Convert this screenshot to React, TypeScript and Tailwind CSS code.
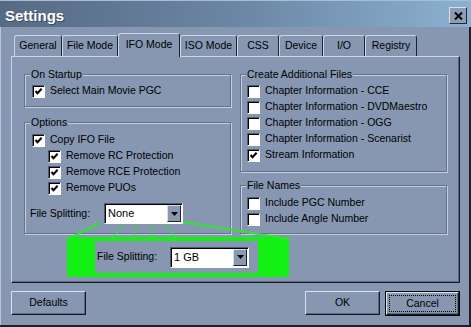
import React from "react";

const tabs = [
  { label: "General", w: "w-[48px]" },
  { label: "File Mode", w: "w-[56px]" },
  { label: "IFO Mode", w: "w-[62px]", active: true },
  { label: "ISO Mode", w: "w-[57px]" },
  { label: "CSS", w: "w-[42px]" },
  { label: "Device", w: "w-[44px]" },
  { label: "I/O", w: "w-[42px]" },
  { label: "Registry", w: "w-[52px]" },
];

function Check({ label, checked }: { label: string; checked?: boolean }) {
  return (
    <div className="flex h-[16px] items-center gap-[5px]">
      <span className="relative h-[13px] w-[13px] shrink-0 border border-t-[#4f5b70] border-l-[#4f5b70] border-b-white border-r-white bg-white shadow-[inset_1px_1px_0_#000]">
        {checked && (
          <svg width="11" height="11" viewBox="0 0 11 11" className="absolute left-0 top-0">
            <path d="M2.5 5 L4.5 7.2 L8.6 2.8" fill="none" stroke="#000" strokeWidth="2" />
          </svg>
        )}
      </span>
      <span className="whitespace-nowrap">{label}</span>
    </div>
  );
}

function Combo({ value }: { value: string }) {
  return (
    <div className="flex h-[21px] w-[79px] border border-t-[#4f5b70] border-l-[#4f5b70] border-b-white border-r-white bg-white p-[1px] shadow-[inset_1px_1px_0_#000]">
      <span className="flex-1 pl-[2px] text-[11px] leading-[17px]">{value}</span>
      <span className="flex w-[14px] items-center justify-center border border-t-[#d6deea] border-l-[#d6deea] border-b-[#1b212b] border-r-[#1b212b] bg-[#8a99b1]">
        <svg width="7" height="4" viewBox="0 0 7 4">
          <path d="M0 0 H7 L3.5 4 Z" fill="#000" />
        </svg>
      </span>
    </div>
  );
}

function Group({ title, children }: { title: string; children: React.ReactNode }) {
  return (
    <fieldset className="border border-[#64738b] shadow-[1px_1px_0_#c3cede,inset_1px_1px_0_#c3cede]">
      <legend className="ml-[5px] bg-[#8797b1] px-[1px] leading-[14px]">{title}</legend>
      {children}
    </fieldset>
  );
}

function Button({ label }: { label: string }) {
  return (
    <button className="flex h-[24px] w-[75px] items-center justify-center border border-t-[#d9e1ec] border-l-[#d9e1ec] border-b-[#151a22] border-r-[#151a22] bg-[#8797b1] shadow-[inset_-1px_-1px_0_#5c6a80]">
      {label}
    </button>
  );
}

export default function App() {
  return (
    <div className="relative h-[327px] w-[471px] overflow-hidden bg-[#8797b1] font-['Liberation_Sans',Arial,sans-serif] text-[10.5px] text-black shadow-[inset_-2px_-2px_0_#1b212b,inset_1px_0_0_#b9c5d6]">
      <div className="flex h-[27px] items-center justify-between bg-gradient-to-r from-[#566a84] via-[#6b86a4] to-[#8cb1d1] px-[5px] shadow-[inset_0_1px_0_#a9bdd2]">
        <span className="mt-[3px] text-[15px] font-bold leading-none text-white [text-shadow:1px_1px_0_#3a4a60]">
          Settings
        </span>
        <button className="mr-[-1px] mt-[4px] flex h-[17px] w-[18px] items-center justify-center border border-t-[#d8e0ec] border-l-[#d8e0ec] border-b-[#232a36] border-r-[#232a36] bg-[#8e9db4]">
          <svg width="9" height="8" viewBox="0 0 9 8">
            <path d="M1 0.5 L8 7.5 M8 0.5 L1 7.5" stroke="#000" strokeWidth="2" />
          </svg>
        </button>
      </div>

      <div className="relative z-10 ml-[14px] mt-[6px] flex h-[24px] items-end">
        {tabs.map((t) =>
          t.active ? (
            <div
              key={t.label}
              className={`${t.w} flex h-[24px] items-center justify-center rounded-t-[3px] border-l border-r border-t border-l-[#cbd5e3] border-t-[#cbd5e3] border-r-[#1d2430] bg-[#8797b1] pb-[2px]`}
            >
              {t.label}
            </div>
          ) : (
            <div
              key={t.label}
              className={`${t.w} mb-[1px] flex h-[21px] items-center justify-center rounded-t-[3px] border-l border-r border-t border-l-[#cbd5e3] border-t-[#cbd5e3] border-r-[#1d2430] bg-[#8797b1]`}
            >
              {t.label}
            </div>
          )
        )}
      </div>

      <div className="-mt-[1px] ml-[11px] w-[449px] border border-t-[#cbd5e3] border-l-[#cbd5e3] border-b-[#161b24] border-r-[#161b24] px-[12px] pb-[5px] pt-[10px] shadow-[inset_-1px_-1px_0_#5d6b82]">
        <div className="flex gap-[9px]">
          <div className="flex w-[207px] flex-col gap-[8px]">
            <Group title="On Startup">
              <div className="pb-[7px] pl-[7px] pt-[2px]">
                <Check checked label="Select Main Movie PGC" />
              </div>
            </Group>
            <Group title="Options">
              <div className="pb-[9px] pl-[7px] pt-[3px]">
                <Check checked label="Copy IFO File" />
                <div className="pl-[16px]">
                  <Check checked label="Remove RC Protection" />
                  <Check checked label="Remove RCE Protection" />
                  <Check checked label="Remove PUOs" />
                </div>
                <div className="-ml-[2px] mt-[7px] flex items-center">
                  <span className="w-[74px]">File Splitting:</span>
                  <Combo value="None" />
                </div>
              </div>
            </Group>
          </div>
          <div className="flex w-[207px] flex-col gap-[6px]">
            <Group title="Create Additional Files">
              <div className="pb-[8px] pl-[6px] pt-[2px]">
                <Check label="Chapter Information - CCE" />
                <Check label="Chapter Information - DVDMaestro" />
                <Check label="Chapter Information - OGG" />
                <Check label="Chapter Information - Scenarist" />
                <Check checked label="Stream Information" />
              </div>
            </Group>
            <Group title="File Names">
              <div className="pb-[6px] pl-[6px] pt-[3px]">
                <Check label="Include PGC Number" />
                <Check label="Include Angle Number" />
              </div>
            </Group>
          </div>
        </div>

        <div className="ml-[43px] mt-[3px] flex h-[40px] w-[222px] bg-[#14f014] py-[4px] pl-[28px] pr-[31px]">
          <div className="flex flex-1 items-center bg-[#8797b1] pl-[2px]">
            <span className="w-[73px]">File Splitting:</span>
            <Combo value="1 GB" />
          </div>
        </div>
      </div>

      <div className="mt-[8px] flex px-[11px]">
        <Button label="Defaults" />
        <div className="ml-auto">
          <Button label="OK" />
        </div>
        <div className="ml-[5px] h-[25px] w-[75px] border border-black">
          <div className="flex h-full w-full items-center justify-center border border-t-[#d9e1ec] border-l-[#d9e1ec] border-b-[#151a22] border-r-[#151a22] p-[2px] shadow-[inset_-1px_-1px_0_#5c6a80]">
            <div className="flex h-full w-full items-center justify-center border border-dotted border-black">
              Cancel
            </div>
          </div>
        </div>
      </div>

      <svg width="471" height="327" className="pointer-events-none absolute left-0 top-0 z-20">
        <g stroke="#2fe62f" strokeWidth="2" fill="none">
          <line x1="100" y1="223" x2="70" y2="238" />
          <line x1="183" y1="222" x2="289" y2="239" />
        </g>
        <g stroke="#3ce03c" strokeWidth="1.5" fill="none" opacity="0.7">
          <line x1="124" y1="225" x2="112" y2="238" />
          <line x1="138" y1="225" x2="132" y2="238" />
          <line x1="152" y1="225" x2="152" y2="238" />
          <line x1="166" y1="225" x2="176" y2="238" />
        </g>
      </svg>
    </div>
  );
}
